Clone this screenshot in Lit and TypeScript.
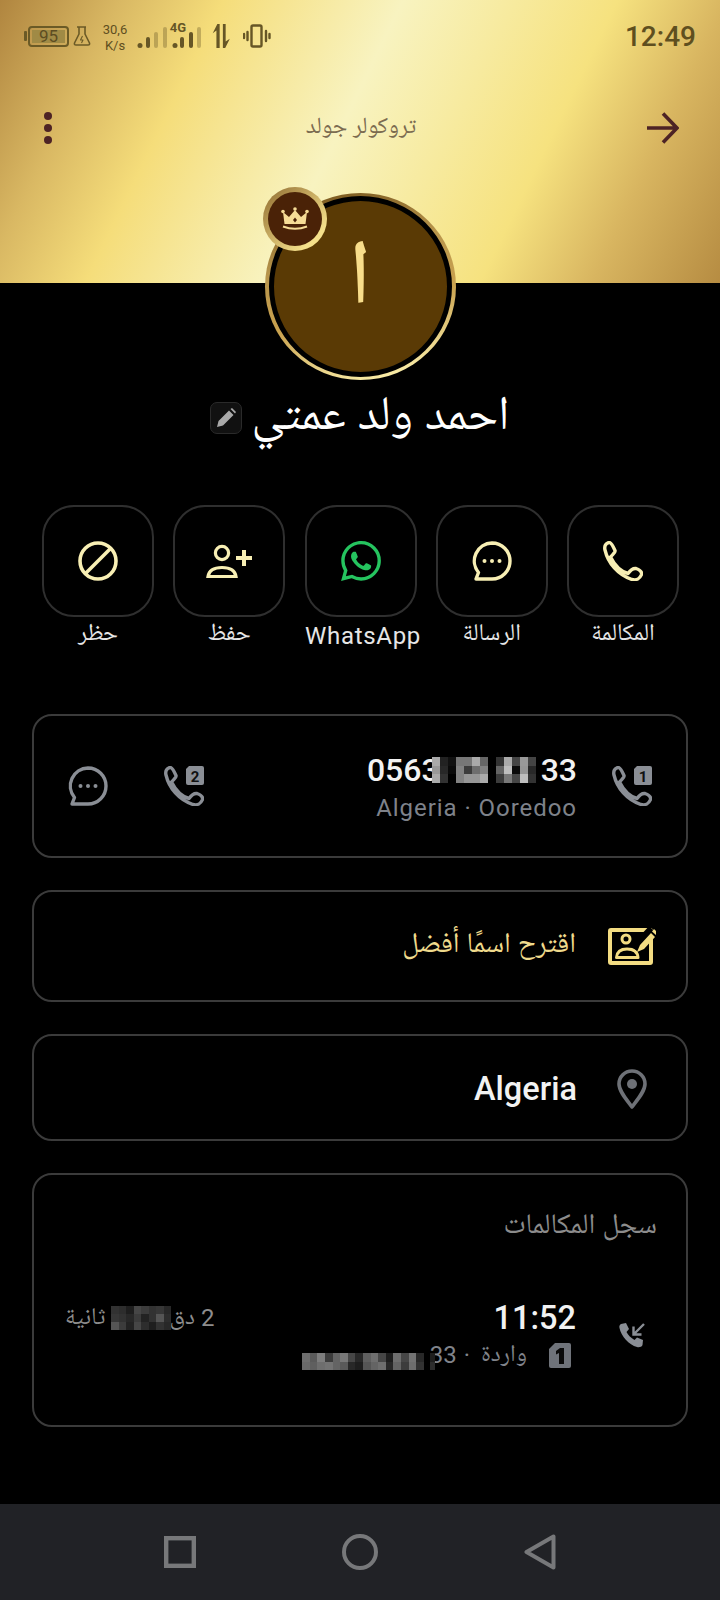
import { LitElement, html, css } from "lit";
import { customElement } from "lit/decorators.js";

const GOLD = "#f8efb4";
const GREY = "#8a8e95";

// censored bits of the phone numbers, grey levels per cell
const NUMBER_BLUR = [
  [170, 34, 17, 119, 119, 170, 102, 0, 51, 170, 68, 153, 68],
  [153, 40, 10, 130, 60, 110, 130, 0, 100, 190, 10, 150, 40],
  [170, 50, 0, 130, 150, 150, 170, 0, 60, 120, 70, 190, 50],
];
const DURATION_BLUR = [
  [50, 45, 30, 70, 60, 50, 55, 40],
  [55, 50, 40, 60, 35, 50, 85, 45],
  [85, 60, 35, 70, 45, 30, 50, 40],
];
const CALL_BLUR = [
  [110, 90, 125, 60, 100, 120, 70, 40, 95, 110, 70, 30, 110, 70, 115, 40],
  [105, 95, 110, 115, 100, 90, 40, 30, 85, 100, 110, 40, 100, 60, 110, 50],
];

const pixels = (rows: number[][], w: number, h: number) => html`
  <span class="pixels" style="grid-template-columns:repeat(${rows[0].length},${w}px);grid-auto-rows:${h}px">
    ${rows.flat().map((v) => html`<i style="background:rgb(${v},${v},${v})"></i>`)}
  </span>
`;

const phonePath =
  "M6 1.5 C3 2 1 5 2 9 C5 22 15 34 29 38.5 C33 39.5 37 37.5 38.5 33.5 C39 31.5 37 29 33 27.5 C30 27 27.5 29 25 32.5 C18 30.5 12 25 7.5 16 C10 13 13 11 12 9.5 C10 5 8 1 6 1.5 Z";

const phoneIcon = (color: string) => html`
  <svg width="40" height="40" viewBox="0 0 40 40" fill="none" stroke=${color} stroke-width="3.4" stroke-linejoin="round">
    <path d=${phonePath}></path>
  </svg>
`;

const simPhone = (n: string) => html`
  <svg width="40" height="40" viewBox="0 0 40 40">
    <path d=${phonePath} fill="none" stroke=${GREY} stroke-width="3.4" stroke-linejoin="round"></path>
    <path d="M25 0 H38 Q40 0 40 2 V17 Q40 19 38 19 H24 Q22 19 22 17 V3 Z" fill=${GREY}></path>
    <text x="31" y="15.5" text-anchor="middle" class="simnum">${n}</text>
  </svg>
`;

const bubble = (color: string) => html`
  <svg width="40" height="40" viewBox="0 0 40 40" fill="none" stroke=${color} stroke-width="3.4" stroke-linejoin="round">
    <path d="M20 2 A18 18 0 1 1 20 38 L4 38 L6.5 31.5 A18 18 0 0 1 20 2 Z"></path>
    <g fill=${color} stroke="none">
      <circle cx="12.5" cy="20" r="2"></circle>
      <circle cx="20" cy="20" r="2"></circle>
      <circle cx="27.5" cy="20" r="2"></circle>
    </g>
  </svg>
`;

@customElement("app-root")
export class AppRoot extends LitElement {
  static styles = css`
    :host {
      display: flex;
      flex-direction: column;
      width: 720px;
      height: 1600px;
      background: #000;
      color: #fff;
      font-family: Roboto, "Noto Naskh Arabic", "DejaVu Sans", sans-serif;
      overflow: hidden;
    }
    svg {
      display: block;
      flex: none;
    }
    .pixels {
      display: inline-grid;
      flex: none;
      z-index: 1;
    }
    .pixels i {
      display: block;
    }
    .simnum {
      font: 700 15px Roboto, sans-serif;
      fill: #111;
    }
    .fourg {
      font: 700 13px Roboto, sans-serif;
      fill: #665626;
    }

    /* gold header */
    .header {
      height: 283px;
      flex: none;
      background: linear-gradient(116deg, #b0853f 0%, #d9b863 14%, #f5dd7a 26%, #f8f3c0 47%, #f6e27f 72%, #d8b560 85%, #b68c42 100%);
    }
    .status {
      display: flex;
      align-items: center;
      height: 72px;
      padding: 0 24px;
      color: #5f4f1f;
    }
    .battery {
      display: flex;
      align-items: center;
    }
    .nub {
      width: 3px;
      height: 10px;
      background: #6b5a26;
      border-radius: 1px;
    }
    .cell {
      width: 41px;
      height: 21px;
      margin-left: 1px;
      box-sizing: border-box;
      border: 2px solid #6b5a26;
      border-radius: 4px;
      padding: 2px;
    }
    .cell span {
      display: block;
      height: 100%;
      background: #a08a45;
      font-size: 17px;
      line-height: 13px;
      text-align: center;
      color: #5c4d22;
    }
    .flask {
      margin-left: 4px;
    }
    .speed {
      width: 46px;
      margin: 3px 0 0 1px;
      font-size: 13px;
      line-height: 16px;
      text-align: center;
    }
    .signal {
      margin-left: -1px;
    }
    .arrows {
      margin-left: 9px;
    }
    .vibrate {
      margin-left: 12px;
    }
    .time {
      margin-left: auto;
      font-size: 28px;
      font-weight: 500;
      color: #5f4f1f;
    }
    .toolbar {
      display: flex;
      align-items: center;
      height: 56px;
      margin-top: 28px;
      padding: 0 41px 0 44px;
    }
    .dots {
      display: flex;
      flex-direction: column;
      gap: 4px;
    }
    .dots i {
      width: 8px;
      height: 8px;
      border-radius: 50%;
      background: #4d2325;
    }
    .title {
      flex: 1;
      padding-left: 25px;
      font-size: 23.3px;
      text-align: center;
      color: #7b6b50;
    }

    /* avatar and name */
    .avatar {
      position: relative;
      flex: none;
      align-self: center;
      width: 191px;
      height: 187px;
      margin-top: -90px;
      box-sizing: border-box;
      padding: 3px 4px;
      border-radius: 50%;
      background: linear-gradient(165deg, #6b4a14 0%, #b8954c 35%, #c9a24f 60%, #fbeea9 92%);
    }
    .avatar-in {
      box-sizing: border-box;
      width: 100%;
      height: 100%;
      padding-bottom: 8px;
      border-radius: 50%;
      border: 5px solid #000;
      background: #5a3a05;
      display: flex;
      align-items: center;
      justify-content: center;
      font-size: 92px;
      font-weight: 500;
      color: #f8dd8b;
    }
    .badge {
      position: absolute;
      left: -2px;
      top: -6px;
      width: 64px;
      height: 64px;
      box-sizing: border-box;
      padding: 5px;
      border-radius: 50%;
      background: linear-gradient(135deg, #8e6a2f, #f5e08b 80%);
    }
    .badge div {
      width: 100%;
      height: 100%;
      border-radius: 50%;
      background: #4a2207;
      display: flex;
      align-items: center;
      justify-content: center;
    }
    .name {
      display: flex;
      flex: none;
      align-items: center;
      justify-content: center;
      gap: 9px;
      height: 60px;
      margin-top: 8px;
      font-size: 48px;
    }
    .edit {
      width: 32px;
      height: 32px;
      box-sizing: border-box;
      border: 1px solid #2a2a2a;
      border-radius: 7px;
      background: #111;
      display: flex;
      align-items: center;
      justify-content: center;
    }

    /* action buttons */
    .actions {
      display: flex;
      flex: none;
      justify-content: space-between;
      margin: 57px 41px 0 42px;
    }
    .action {
      width: 112px;
      display: flex;
      flex-direction: column;
      align-items: center;
    }
    .tile {
      width: 112px;
      height: 112px;
      box-sizing: border-box;
      border: 2px solid #2f2f2f;
      border-radius: 32px;
      display: flex;
      align-items: center;
      justify-content: center;
    }
    .action span {
      height: 36px;
      margin-top: -3px;
      font-size: 24px;
      line-height: 36px;
      white-space: nowrap;
      color: #e6e6e6;
    }
    .action span.latin {
      margin: 1px 0 0 5px;
      font-size: 24px;
      letter-spacing: 0.7px;
    }

    /* cards */
    .cards {
      display: flex;
      flex-direction: column;
      gap: 32px;
      margin: 60px 32px 0;
    }
    .card {
      display: flex;
      align-items: center;
      box-sizing: border-box;
      border: 2px solid #3b3b3b;
      border-radius: 20px;
      padding: 0 34px 0 32px;
    }
    .card.number {
      height: 144px;
      padding-left: 34px;
    }
    .card.suggest {
      height: 112px;
      justify-content: flex-end;
      padding-right: 30px;
    }
    .card.place {
      height: 107px;
      justify-content: flex-end;
      padding: 2px 39px 0 0;
    }
    .sim2 {
      margin-left: 56px;
    }
    .num {
      margin-left: auto;
      margin-right: 35px;
      padding-top: 1px;
      display: flex;
      flex-direction: column;
      align-items: flex-end;
    }
    .num .big {
      display: flex;
      align-items: center;
      height: 38px;
      font-size: 32px;
      font-weight: 500;
      color: #f2f2f2;
    }
    .num .big .pixels {
      margin: 0 5px 0 -8px;
    }
    .num .sub {
      font-size: 24px;
      letter-spacing: 0.95px;
      color: #7e828a;
      margin-top: 5px;
    }
    .suggest span {
      margin-right: 32px;
      font-size: 28.3px;
      color: #efda8c;
    }
    .place span {
      margin-right: 40px;
      font-size: 32.5px;
      font-weight: 500;
      color: #f2f2f2;
    }
    .card.log {
      display: block;
      height: 254px;
      padding: 0 0 0 31px;
    }
    .log h2 {
      margin: 25px 29px 0 0;
      height: 48px;
      font-size: 28.5px;
      font-weight: 400;
      line-height: 48px;
      text-align: right;
      color: #8c8c8c;
    }
    .entry {
      display: flex;
      align-items: flex-start;
      margin-top: 52px;
    }
    .dur {
      display: flex;
      align-items: center;
      height: 24px;
      margin-top: 6px;
      font-size: 24px;
      color: #8d8d8d;
    }
    .dur .pixels {
      margin: 0 -2px 0 6px;
    }
    .dur b {
      font-weight: 400;
      margin-left: 6px;
      font-size: 24px;
    }
    .when {
      margin-left: auto;
      display: flex;
      flex-direction: column;
      align-items: flex-end;
    }
    .when .big {
      height: 36px;
      font-size: 32.5px;
      font-weight: 500;
      line-height: 36px;
      color: #f2f2f2;
    }
    .when .sub {
      display: flex;
      align-items: center;
      height: 28px;
      margin: 5px 5px 0 0;
      font-size: 24px;
      color: #80848b;
    }
    .when .sub .gap {
      margin-right: 6px;
    }
    .when .sub .cut {
      margin-right: -5px;
      z-index: 1;
    }
    .when .sub .dot {
      margin: 0 11px 0 7px;
    }
    .when .sub svg {
      margin-left: 22px;
    }
    .in {
      margin: 22px 41px 0 43px;
    }

    /* nav bar */
    .nav {
      margin-top: auto;
      flex: none;
      height: 96px;
      background: #212226;
      display: flex;
      align-items: center;
      justify-content: space-between;
      padding: 0 164px;
    }
  `;

  render() {
    return html`
      <div class="header">
        <div class="status">
          <div class="battery">
            <div class="nub"></div>
            <div class="cell"><span>95</span></div>
          </div>
          <svg class="flask" width="18" height="20" viewBox="0 0 18 20" fill="none" stroke="#6b5a26" stroke-width="1.6" stroke-linejoin="round">
            <path d="M4 1 H13 M6 1.5 V8 L1.5 17 Q1 19 3 19 H15 Q17 19 16.5 17 L12 8 V1.5"></path>
            <path d="M9.5 10 L7.5 14 H10 L8.5 17" stroke-width="1.1"></path>
          </svg>
          <div class="speed">30,6<br />K/s</div>
          <svg class="signal" width="66" height="32" viewBox="0 -2 66 32" fill="#665626">
            <circle cx="3" cy="23.5" r="2.5"></circle>
            <rect x="9" y="15" width="4" height="11" rx="2"></rect>
            <rect x="17" y="10" width="4" height="16" rx="2" opacity="0.35"></rect>
            <rect x="26" y="5" width="4" height="21" rx="2" opacity="0.35"></rect>
            <circle cx="38" cy="23.5" r="2.5"></circle>
            <rect x="43" y="15" width="4" height="11" rx="2"></rect>
            <rect x="52" y="10" width="4" height="16" rx="2"></rect>
            <rect x="60" y="5" width="4" height="21" rx="2" opacity="0.35"></rect>
            <text x="41" y="10" text-anchor="middle" class="fourg">4G</text>
          </svg>
          <svg class="arrows" width="19" height="24" viewBox="0 0 19 26" fill="#665626">
            <path d="M4 26 V7 L0 10 L5 0 H7.5 V26 Z M11 0 H14 V19 L18.5 16 L13.5 26 H11 Z"></path>
          </svg>
          <svg class="vibrate" width="28" height="24" viewBox="0 0 28 24" fill="none" stroke="#665626">
            <rect x="8.5" y="1.5" width="10" height="21" rx="1.5" stroke-width="2.4"></rect>
            <path d="M4.5 8 V16 M1 10 V14 M23 7 V17 M26.5 10 V14" stroke-width="2.4" stroke-linecap="round"></path>
          </svg>
          <div class="time">12:49</div>
        </div>
        <div class="toolbar">
          <div class="dots"><i></i><i></i><i></i></div>
          <div class="title">تروكولر جولد</div>
          <svg width="34" height="34" viewBox="0 0 34 34" fill="none" stroke="#4d2325" stroke-width="3.6">
            <path d="M2 17 H32 M18 2.5 L32 17 L18 31.5"></path>
          </svg>
        </div>
      </div>

      <div class="avatar">
        <div class="avatar-in">ا</div>
        <div class="badge">
          <div>
            <svg width="28" height="24" viewBox="0 0 28 24" fill="#f6dc96">
              <path d="M2 5 L8 10 L14 3 L20 10 L26 5 L24.5 17 H3.5 Z"></path>
              <circle cx="2" cy="4.5" r="1.8"></circle>
              <circle cx="14" cy="2" r="1.8"></circle>
              <circle cx="26" cy="4.5" r="1.8"></circle>
              <path d="M14 10.5 L16 13 L14 15.5 L12 13 Z" fill="#4a2207"></path>
              <path d="M2 19.5 Q14 24 26 19.5" fill="none" stroke="#f6dc96" stroke-width="2"></path>
            </svg>
          </div>
        </div>
      </div>
      <div class="name">
        <div class="edit">
          <svg width="20" height="20" viewBox="0 0 20 20" fill="#a9a9a9">
            <path d="M1 19 L2.5 13 L13 2.5 L17.5 7 L7 17.5 Z M14.5 1 L16 0 L20 4 L19 5.5 Z"></path>
          </svg>
        </div>
        <div>احمد ولد عمتي</div>
      </div>

      <div class="actions">
        <div class="action">
          <div class="tile">
            <svg width="40" height="40" viewBox="0 0 40 40" fill="none" stroke=${GOLD} stroke-width="3.6">
              <circle cx="20" cy="20" r="18"></circle>
              <path d="M7.5 32.5 L32.5 7.5"></path>
            </svg>
          </div>
          <span>حظر</span>
        </div>
        <div class="action">
          <div class="tile">
            <svg width="46" height="34" viewBox="0 0 46 34" fill="none" stroke=${GOLD} stroke-width="3.2">
              <circle cx="16" cy="9" r="6.6"></circle>
              <path d="M2 32.5 C3 26 9 23.5 16 23.5 C23 23.5 29 26 30 32.5 Z"></path>
              <path d="M30 14 H46 M38 6 V22" stroke-width="4"></path>
            </svg>
          </div>
          <span>حفظ</span>
        </div>
        <div class="action">
          <div class="tile">
            <svg width="40" height="40" viewBox="0 0 24 24" fill="#25c45f">
              <path d="M17.472 14.382c-.297-.149-1.758-.867-2.03-.967-.273-.099-.471-.148-.67.15-.197.297-.767.966-.94 1.164-.173.199-.347.223-.644.075-.297-.15-1.255-.463-2.39-1.475-.883-.788-1.48-1.761-1.653-2.059-.173-.297-.018-.458.13-.606.134-.133.298-.347.446-.52.149-.174.198-.298.298-.497.099-.198.05-.371-.025-.52-.075-.149-.669-1.612-.916-2.207-.242-.579-.487-.5-.669-.51-.173-.008-.371-.01-.57-.01-.198 0-.52.074-.792.372-.272.297-1.04 1.016-1.04 2.479 0 1.462 1.065 2.875 1.213 3.074.149.198 2.096 3.2 5.077 4.487.709.306 1.262.489 1.694.625.712.227 1.36.195 1.871.118.571-.085 1.758-.719 2.006-1.413.248-.694.248-1.289.173-1.413-.074-.124-.272-.198-.57-.347m-5.421 7.403h-.004a9.87 9.87 0 01-5.031-1.378l-.361-.214-3.741.982.998-3.648-.235-.374a9.86 9.86 0 01-1.51-5.26c.001-5.45 4.436-9.884 9.888-9.884 2.64 0 5.122 1.03 6.988 2.898a9.825 9.825 0 012.893 6.994c-.003 5.45-4.437 9.884-9.885 9.884m8.413-18.297A11.815 11.815 0 0012.05 0C5.495 0 .16 5.335.157 11.892c0 2.096.547 4.142 1.588 5.945L.057 24l6.305-1.654a11.882 11.882 0 005.683 1.448h.005c6.554 0 11.89-5.335 11.893-11.893a11.821 11.821 0 00-3.48-8.413z"></path>
            </svg>
          </div>
          <span class="latin">WhatsApp</span>
        </div>
        <div class="action">
          <div class="tile">${bubble(GOLD)}</div>
          <span>الرسالة</span>
        </div>
        <div class="action">
          <div class="tile">${phoneIcon(GOLD)}</div>
          <span>المكالمة</span>
        </div>
      </div>

      <div class="cards">
        <div class="card number">
          ${bubble(GREY)}
          <div class="sim2">${simPhone("2")}</div>
          <div class="num">
            <div class="big">0563${pixels(NUMBER_BLUR, 8, 8.4)}33</div>
            <div class="sub">Algeria · Ooredoo</div>
          </div>
          ${simPhone("1")}
        </div>

        <div class="card suggest">
          <span>اقترح اسمًا أفضل</span>
          <svg width="48" height="38" viewBox="0 0 48 38" fill="none" stroke="#f3dc82" stroke-width="4" stroke-linejoin="round">
            <rect x="2" y="3" width="41" height="33" rx="1"></rect>
            <circle cx="18" cy="12" r="4" stroke-width="3"></circle>
            <path d="M8.5 30.5 C9 24.5 13 22 19 22 C25 22 29.5 24.5 30 30.5 Z" stroke-width="3"></path>
            <path d="M27 22 L45 3" stroke="#000" stroke-width="11" stroke-linecap="butt"></path>
            <path d="M29 25 L32 18 L43 6 L47 10 L36 22 Z M44 4.5 L46 2 L48 4 L48 8 Z" fill="#f3dc82" stroke="none"></path>
          </svg>
        </div>

        <div class="card place">
          <span>Algeria</span>
          <svg width="30" height="40" viewBox="0 0 30 40" fill="none" stroke="#6e7177" stroke-width="3.6">
            <path d="M15 38 C9 30 2 22 2 15 A13 13 0 0 1 28 15 C28 22 21 30 15 38 Z" stroke-linejoin="round"></path>
            <circle cx="15" cy="15" r="5" fill="#6e7177" stroke="none"></circle>
          </svg>
        </div>

        <div class="card log">
          <h2>سجل المكالمات</h2>
          <div class="entry">
            <div class="dur">
              <span>ثانية</span>
              ${pixels(DURATION_BLUR, 7.5, 7.7)}
              <span>دق</span>
              <b>2</b>
            </div>
            <div class="when">
              <div class="big">11:52</div>
              <div class="sub">
                <span class="gap">${pixels(CALL_BLUR, 7.6, 8.5)}</span>
                <span class="cut">${pixels([[30], [45]], 5, 8.5)}</span>
                <span>33</span>
                <span class="dot">·</span>
                <span>واردة</span>
                <svg width="22" height="25" viewBox="0 0 22 25">
                  <path d="M6 0 H20 Q22 0 22 2 V23 Q22 25 20 25 H2 Q0 25 0 23 V6 Z" fill="#6f737a"></path>
                  <path d="M7 8 L11 5 H15 V21 H10 V10 L7 11.5 Z" fill="#0a0a0a"></path>
                </svg>
              </div>
            </div>
            <svg class="in" width="26" height="26" viewBox="0 0 26 26" fill=${GREY}>
              <path d="M2 2 L7 1 L10 7 L7.5 10 C9 13 12 16 15.5 18 L18 15.5 L24 18 L23.5 23 C23 25 20 25.5 18 25 C10 23 2 14 0.5 6 C0 4 0.5 3 2 2 Z"></path>
              <path d="M25 2 L15 12 M14.5 4.5 V12.5 H22.5" fill="none" stroke=${GREY} stroke-width="2.4"></path>
            </svg>
          </div>
        </div>
      </div>

      <div class="nav">
        <svg width="32" height="32" viewBox="0 0 32 32" fill="none" stroke="#77787a" stroke-width="4.4">
          <rect x="2.2" y="2.2" width="27.6" height="27.6"></rect>
        </svg>
        <svg width="36" height="36" viewBox="0 0 36 36" fill="none" stroke="#77787a" stroke-width="4">
          <circle cx="18" cy="18" r="16"></circle>
        </svg>
        <svg width="32" height="36" viewBox="0 0 32 36" fill="none" stroke="#77787a" stroke-width="4" stroke-linejoin="round">
          <path d="M29.5 2.5 V33.5 L2.5 18 Z"></path>
        </svg>
      </div>
    `;
  }
}
